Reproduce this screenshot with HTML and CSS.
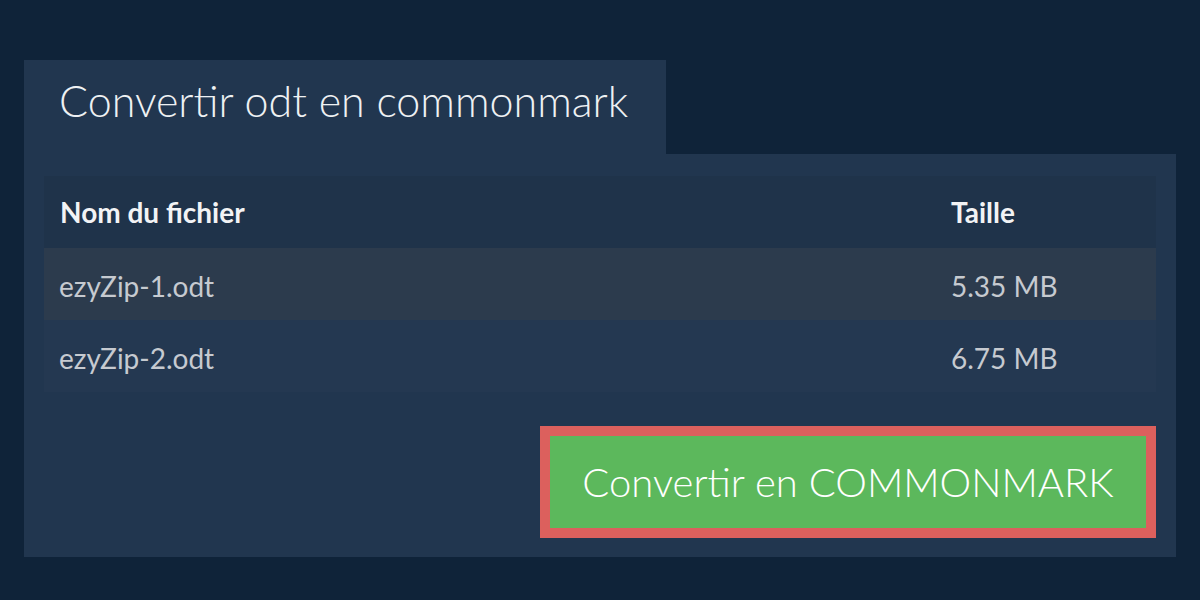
FILE: index.html
```html
<!DOCTYPE html>
<html lang="fr">
<head>
<meta charset="utf-8">
<link rel="stylesheet" href="styles.css">
</head>
<body>
<div class="page">
  <div class="tab"><h1 class="title">Convertir odt en commonmark</h1></div>
  <div class="panel">
    <table class="files">
      <thead>
        <tr><th class="name">Nom du fichier</th><th class="size">Taille</th></tr>
      </thead>
      <tbody>
        <tr class="odd"><td class="name">ezyZip-1.odt</td><td class="size">5.35 MB</td></tr>
        <tr class="even"><td class="name">ezyZip-2.odt</td><td class="size">6.75 MB</td></tr>
      </tbody>
    </table>
    <div class="actions">
      <button class="convert">Convertir en COMMONMARK</button>
    </div>
  </div>
</div>
</body>
</html>
```

FILE: styles.css
```css
html, body {
  margin: 0;
  padding: 0;
  background: #0f2339;
  font-family: Lato, "Open Sans", sans-serif;
}
.page {
  padding: 60px 24px 0 24px;
  width: 1152px;
}
.tab {
  width: 642px;
  height: 94px;
  background: #21364f;
  box-sizing: border-box;
  padding: 19px 0 0 35px;
}
.title {
  margin: 0;
  font-weight: 300;
  font-size: 43px;
  color: #eef1f3;
  line-height: 1;
}
.panel {
  background: #21364f;
  padding: 22px 20px 19px 20px;
  display: flex;
  flex-direction: column;
}
.files {
  width: 100%;
  border-collapse: collapse;
  font-size: 28px;
}
.files th, .files td {
  height: 72px;
  padding: 0 0 0 15px;
  text-align: left;
  box-sizing: border-box;
}
.files th {
  background: #1f334a;
  color: #f2f3f5;
  font-weight: 700;
  padding-left: 16px;
}
.files td {
  color: #c6cad0;
  padding-top: 4px;
}
.files .size {
  width: 205px;
  padding-left: 0;
}
.odd td { background: #2c3b4d; }
.even td { background: #243851; }
.actions {
  display: flex;
  justify-content: flex-end;
  margin-top: 34px;
}
.convert {
  width: 616px;
  height: 112px;
  box-sizing: border-box;
  border: 10px solid #dc605d;
  background: #5cb85c;
  color: #ffffff;
  font-family: Lato, sans-serif;
  font-weight: 300;
  font-size: 40px;
  padding: 0;
}
```
